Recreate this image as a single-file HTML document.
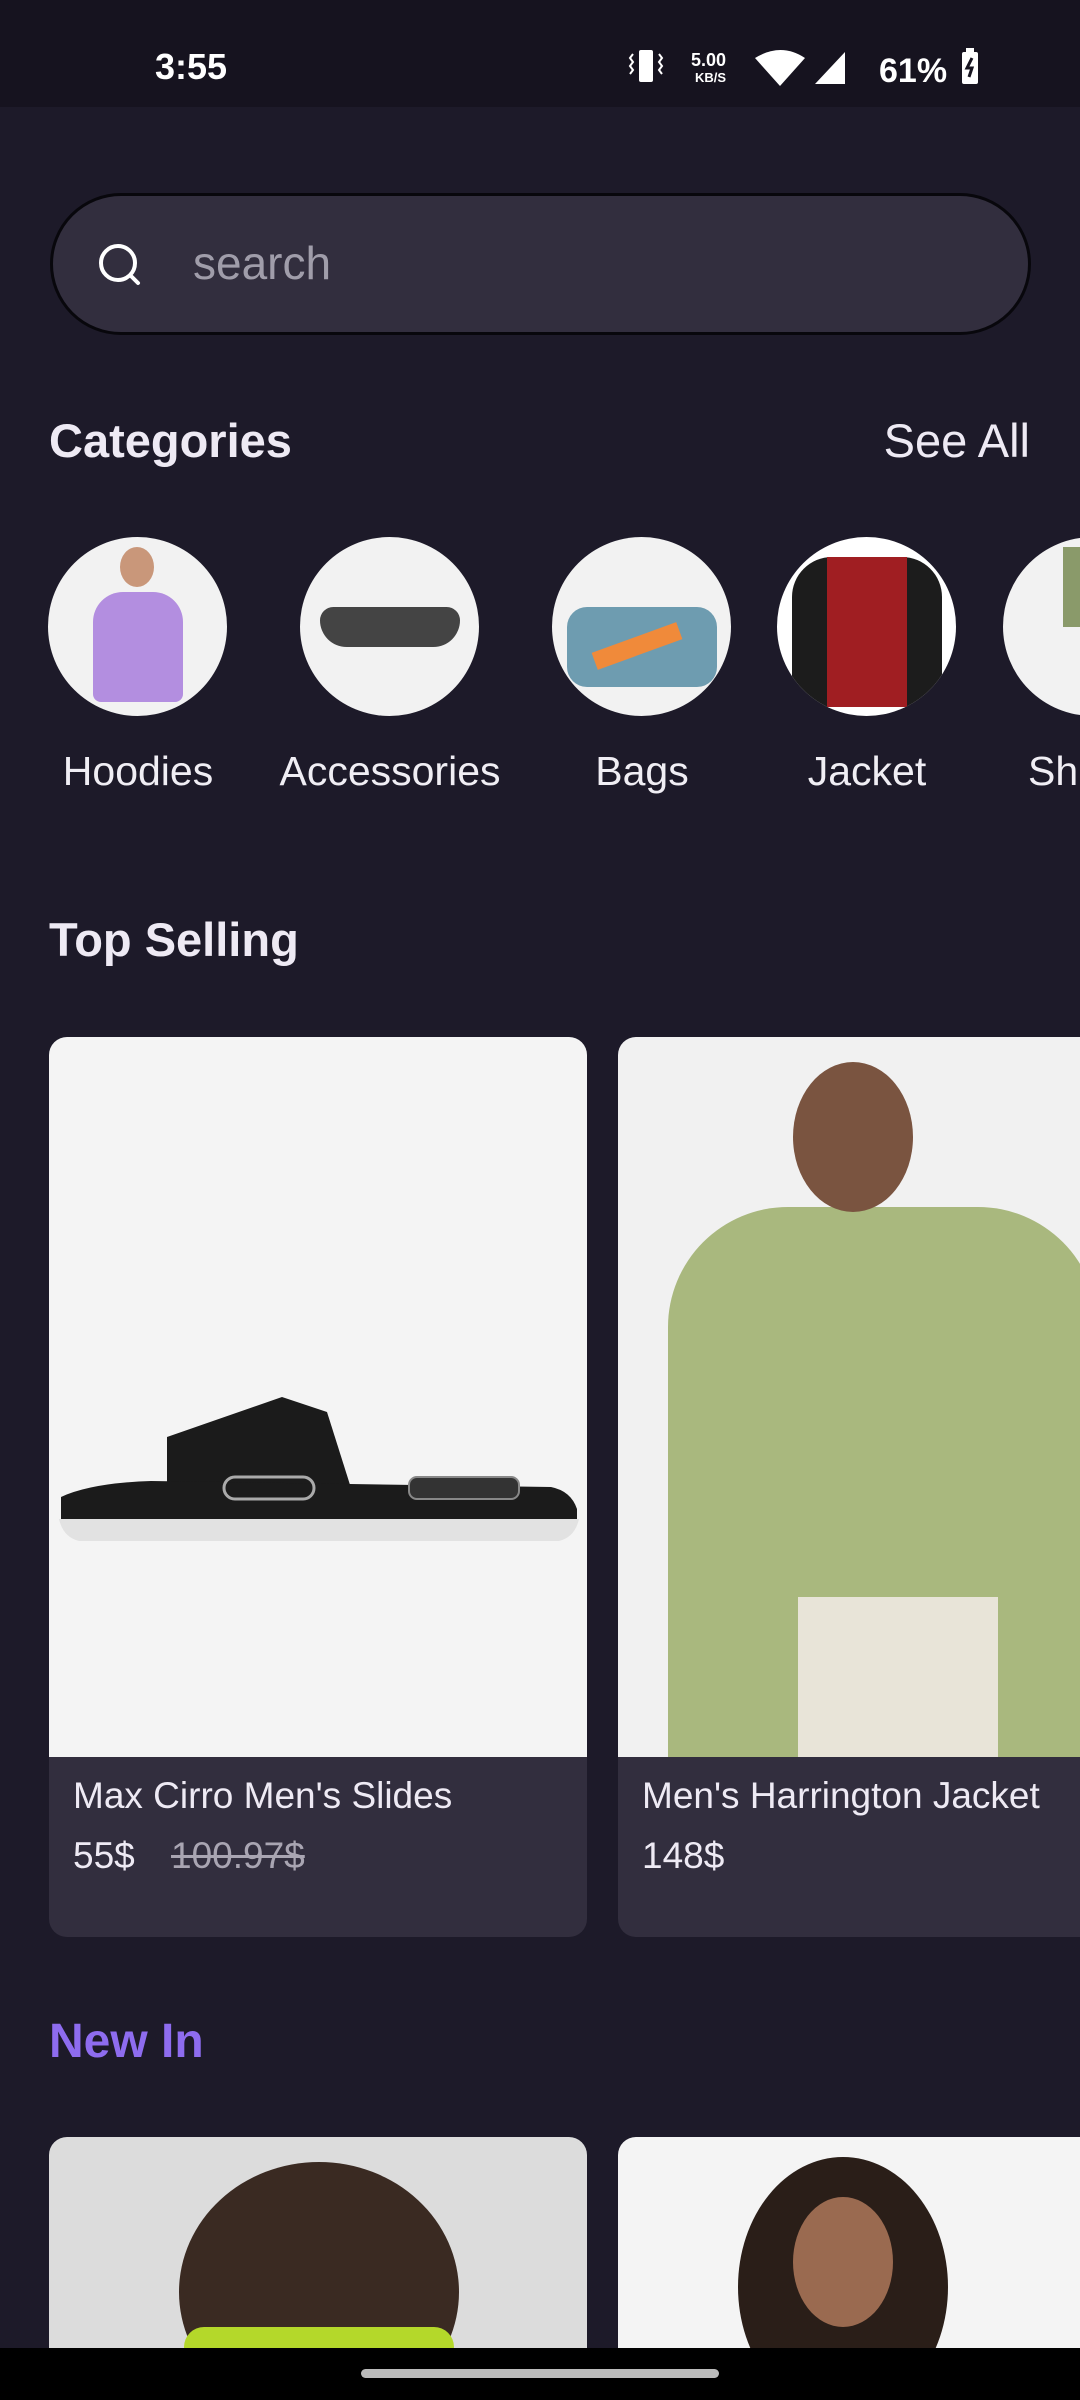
<!DOCTYPE html>
<html><head><meta charset="utf-8"><style>
*{margin:0;padding:0;box-sizing:border-box}
body{width:1080px;height:2400px;overflow:hidden;background:#1d1a29;font-family:"Liberation Sans",sans-serif;color:#fff;position:relative}
.abs{position:absolute}
.status{left:0;top:0;width:1080px;height:107px;background:#16131f}
.search{left:50px;top:193px;width:981px;height:142px;border-radius:71px;background:#322e3e;border:3px solid #08070c}
.cat{width:179px;height:179px;border-radius:50%;background:#f2f2f2;overflow:hidden;top:537px}
.lbl{top:748px;font-size:41px;color:#f0eef4;text-align:center;width:260px}
.card{width:538px;border-radius:18px;overflow:hidden;background:#322e3e}
.img{background:#f4f4f4;height:720px;position:relative;overflow:hidden}
.t{font-size:37px;color:#eeeaf4;position:absolute;left:24px}
</style></head><body>
<div class="abs status"></div>
<div class="abs" style="left:155px;top:46px;font-size:36px;font-weight:bold">3:55</div>
<svg class="abs" style="left:625px;top:46px" width="360" height="44" viewBox="0 0 360 44">
<rect x="14" y="4" width="14" height="32" rx="2" fill="#fff"/>
<path d="M8 8l-3 4 3 4-3 4 3 4-3 4M34 8l3 4-3 4 3 4-3 4 3 4" stroke="#fff" stroke-width="2" fill="none"/>
<text x="66" y="20" font-size="18" font-weight="bold" fill="#fff" font-family="Liberation Sans">5.00</text>
<text x="70" y="36" font-size="13" font-weight="bold" fill="#fff" font-family="Liberation Sans">KB/S</text>
<path d="M130 12q26-16 50 0l-25 28z" fill="#fff"/>
<path d="M190 38l30-32v32z" fill="#fff"/>
<text x="254" y="36" font-size="34" font-weight="bold" fill="#fff" font-family="Liberation Sans">61%</text>
<rect x="337" y="6" width="16" height="32" rx="2" fill="#fff"/><rect x="341" y="2" width="8" height="5" fill="#fff"/>
<path d="M347 12l-5 10h5l-3 9" stroke="#16131f" stroke-width="3" fill="none"/>
</svg>
<div class="abs search"></div>
<svg class="abs" style="left:96px;top:241px" width="48" height="48"><circle cx="22" cy="22" r="17" stroke="#fff" stroke-width="4" fill="none"/><path d="M35 35l7 7" stroke="#fff" stroke-width="4" stroke-linecap="round"/></svg>
<div class="abs" style="left:193px;top:236px;font-size:46px;color:#a09daa">search</div>
<div class="abs" style="left:49px;top:413px;font-size:47px;font-weight:bold;color:#eeeaf4">Categories</div>
<div class="abs" style="right:50px;top:413px;font-size:47px;color:#eeeaf4">See All</div>
<div class="abs cat" style="left:48px"><div class="abs" style="left:45px;top:55px;width:90px;height:110px;background:#b38ee0;border-radius:30px 30px 8px 8px"></div><div class="abs" style="left:72px;top:10px;width:34px;height:40px;background:#c9977a;border-radius:50%"></div></div>
<div class="abs cat" style="left:300px"><div class="abs" style="left:20px;top:70px;width:140px;height:40px;background:#444;border-radius:20px 20px 40px 40px"></div></div>
<div class="abs cat" style="left:552px"><div class="abs" style="left:15px;top:70px;width:150px;height:80px;background:#6e9cb0;border-radius:20px"></div><div class="abs" style="left:40px;top:100px;width:90px;height:18px;background:#f08a3a;transform:rotate(-20deg)"></div></div>
<div class="abs cat" style="left:777px;background:#fff"><div class="abs" style="left:15px;top:20px;width:150px;height:150px;background:#1c1c1c;border-radius:40px 40px 0 0"></div><div class="abs" style="left:50px;top:20px;width:80px;height:150px;background:#a01e22"></div></div>
<div class="abs cat" style="left:1003px"><div class="abs" style="left:60px;top:10px;width:60px;height:80px;background:#8a9a6a"></div></div>
<div class="abs lbl" style="left:8px">Hoodies</div>
<div class="abs lbl" style="left:260px">Accessories</div>
<div class="abs lbl" style="left:512px">Bags</div>
<div class="abs lbl" style="left:737px">Jacket</div>
<div class="abs lbl" style="left:1028px;text-align:left">Sh</div>
<div class="abs" style="left:49px;top:912px;font-size:47px;font-weight:bold;color:#eeeaf4">Top Selling</div>
<div class="abs card" style="left:49px;top:1037px;height:900px">
<div class="img"><svg class="abs" style="left:0;top:340px" width="538" height="200" viewBox="0 0 538 200">
<path d="M118 60l115-40 45 15 30 95H118z" fill="#1b1b1b"/>
<path d="M12 120q30-14 90-16l400 6q20 4 26 22v10H12z" fill="#1b1b1b"/>
<path d="M10 142h520q-4 18-20 22H30q-16-4-20-22z" fill="#e2e2e2"/>
<rect x="175" y="100" width="90" height="22" rx="11" fill="none" stroke="#aaa" stroke-width="3"/>
<rect x="360" y="100" width="110" height="22" rx="8" fill="#333" stroke="#888" stroke-width="2"/>
</svg></div>
<div class="t" style="top:738px">Max Cirro Men's Slides</div>
<div class="t" style="top:798px">55$ <span style="margin-left:26px;color:#a9a5b2;text-decoration:line-through">100.97$</span></div>
</div>
<div class="abs card" style="left:618px;top:1037px;height:900px;width:480px">
<div class="img" style="background:#f1f1f1"><div class="abs" style="left:50px;top:170px;width:430px;height:550px;background:#a9b87e;border-radius:120px 120px 0 0"></div>
<div class="abs" style="left:180px;top:560px;width:200px;height:160px;background:#e8e4d8"></div>
<div class="abs" style="left:175px;top:25px;width:120px;height:150px;background:#7a5440;border-radius:50%"></div></div>
<div class="t" style="top:738px">Men's Harrington Jacket</div>
<div class="t" style="top:798px">148$</div>
</div>
<div class="abs" style="left:49px;top:2014px;font-size:48px;font-weight:bold;color:#8e6cef">New In</div>
<div class="abs" style="left:49px;top:2137px;width:538px;height:230px;background:#dcdcdc;border-radius:18px 18px 0 0;overflow:hidden"><div class="abs" style="left:130px;top:25px;width:280px;height:260px;background:#3a2a22;border-radius:50%"></div><div class="abs" style="left:135px;top:190px;width:270px;height:40px;background:#b4d82a;border-radius:20px"></div></div>
<div class="abs" style="left:618px;top:2137px;width:480px;height:230px;background:#f4f4f4;border-radius:18px 18px 0 0;overflow:hidden"><div class="abs" style="left:120px;top:20px;width:210px;height:260px;background:#2a1e18;border-radius:50%"></div><div class="abs" style="left:175px;top:60px;width:100px;height:130px;background:#9a6a50;border-radius:50%"></div></div>
<div class="abs" style="left:0;top:2348px;width:1080px;height:52px;background:#000"></div>
<div class="abs" style="left:361px;top:2369px;width:358px;height:9px;border-radius:5px;background:#bbb"></div>
</body></html>
